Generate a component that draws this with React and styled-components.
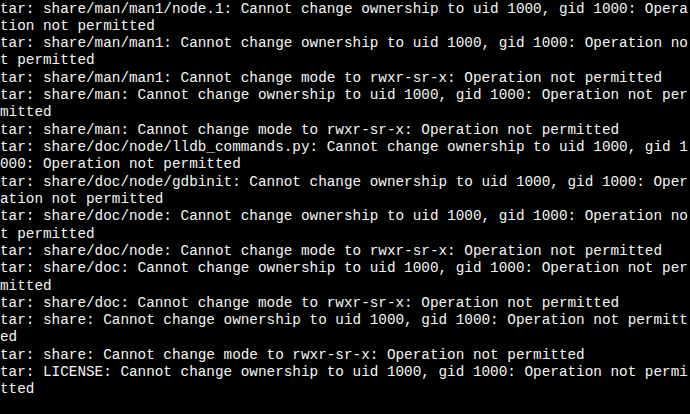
import React from 'react';
import styled, { createGlobalStyle } from 'styled-components';

const GlobalStyle = createGlobalStyle`
  html, body {
    margin: 0;
    padding: 0;
    background: #000;
    overflow: hidden;
  }
`;

const Terminal = styled.div`
  width: 690px;
  height: 414px;
  background: #000;
  color: #f5f5f5;
  font-family: "Liberation Mono", "Courier New", monospace;
  font-size: 14.33px;
  line-height: 17.32px;
  padding: 0;
  box-sizing: border-box;
  overflow: hidden;
`;

const Output = styled.div`
  width: 80ch;
  padding-top: 0.5px;
`;

const Line = styled.div`
  white-space: pre-wrap;
  word-break: break-all;
`;

const lines = [
  'tar: share/man/man1/node.1: Cannot change ownership to uid 1000, gid 1000: Operation not permitted',
  'tar: share/man/man1: Cannot change ownership to uid 1000, gid 1000: Operation not permitted',
  'tar: share/man/man1: Cannot change mode to rwxr-sr-x: Operation not permitted',
  'tar: share/man: Cannot change ownership to uid 1000, gid 1000: Operation not permitted',
  'tar: share/man: Cannot change mode to rwxr-sr-x: Operation not permitted',
  'tar: share/doc/node/lldb_commands.py: Cannot change ownership to uid 1000, gid 1000: Operation not permitted',
  'tar: share/doc/node/gdbinit: Cannot change ownership to uid 1000, gid 1000: Operation not permitted',
  'tar: share/doc/node: Cannot change ownership to uid 1000, gid 1000: Operation not permitted',
  'tar: share/doc/node: Cannot change mode to rwxr-sr-x: Operation not permitted',
  'tar: share/doc: Cannot change ownership to uid 1000, gid 1000: Operation not permitted',
  'tar: share/doc: Cannot change mode to rwxr-sr-x: Operation not permitted',
  'tar: share: Cannot change ownership to uid 1000, gid 1000: Operation not permitted',
  'tar: share: Cannot change mode to rwxr-sr-x: Operation not permitted',
  'tar: LICENSE: Cannot change ownership to uid 1000, gid 1000: Operation not permitted',
];

export default function App() {
  return (
    <>
      <GlobalStyle />
      <Terminal>
        <Output>
          {lines.map((text, i) => (
            <Line key={i}>{text}</Line>
          ))}
        </Output>
      </Terminal>
    </>
  );
}
